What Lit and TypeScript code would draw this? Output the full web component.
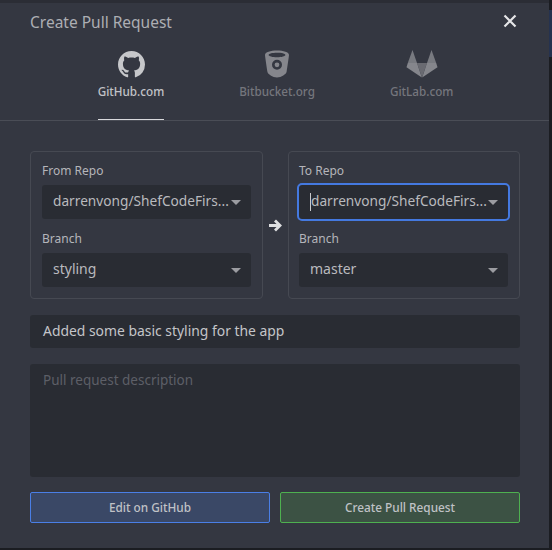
import { LitElement, html, css, svg } from 'lit';
import { customElement } from 'lit/decorators.js';

const githubIcon = svg`<svg viewBox="0 0 16 16" width="27" height="27"><path fill="currentColor" d="M8 0C3.58 0 0 3.58 0 8c0 3.54 2.29 6.53 5.47 7.59.4.07.55-.17.55-.38 0-.19-.01-.82-.01-1.49-2.01.37-2.53-.49-2.69-.94-.09-.23-.48-.94-.82-1.13-.28-.15-.68-.52-.01-.53.63-.01 1.08.58 1.23.82.72 1.21 1.87.87 2.33.66.07-.52.28-.87.51-1.07-1.78-.2-3.64-.89-3.64-3.95 0-.87.31-1.59.82-2.15-.08-.2-.36-1.02.08-2.12 0 0 .67-.21 2.2.82.64-.18 1.32-.27 2-.27s1.36.09 2 .27c1.53-1.04 2.2-.82 2.2-.82.44 1.1.16 1.92.08 2.12.51.56.82 1.27.82 2.15 0 3.07-1.87 3.75-3.65 3.95.29.25.54.73.54 1.48 0 1.07-.01 1.93-.01 2.2 0 .21.15.46.55.38A8.01 8.01 0 0 0 16 8c0-4.42-3.58-8-8-8z"/></svg>`;

const bitbucketIcon = svg`<svg viewBox="0 0 28 28" width="28" height="28"><path fill="currentColor" fill-rule="evenodd" d="M14 .500C7.500.500 2 2 2 5c0 .800 1.800 13.200 2.400 16.800.400 2.400 5.200 5.700 9.600 5.700s9.200-3.300 9.600-5.700C24.200 18.200 26 5.800 26 5c0-3-5.500-4.500-12-4.500zM14 2.800c4.600 0 8.400.900 8.400 2.100S18.600 7.200 14 7.200 5.600 6.100 5.600 4.900 9.400 2.800 14 2.800zM14 9.800a5 5 0 1 1 0 10 5 5 0 0 1 0-10zM14 12.400a2.400 2.400 0 1 0 0 4.800 2.400 2.400 0 0 0 0-4.800z"/></svg>`;

// fox logo: ears and wings in the full grey, the middle wedge a bit darker
const gitlabIcon = svg`<svg viewBox="0 0 32 28" width="32" height="28">
  <g fill="currentColor">
    <path d="M6.500 0 11 13H1.800z" opacity=".85" />
    <path d="M25.500 0 30.200 13H21z" opacity=".85" />
    <path d="M1.800 13H11l4.800 14.500L.5 17.200z" />
    <path d="M30.200 13H21l-4.800 14.500 15.300-10.300z" />
    <path d="M11 13h10l-5 14.500z" opacity=".65" />
  </g>
</svg>`;

const arrowIcon = svg`<svg viewBox="0 0 13 13" width="13" height="13"><path fill="none" stroke="currentColor" stroke-width="2.800" d="M0 6.500h10.500M6 1.500l5 5-5 5"/></svg>`;

@customElement('app-root')
export class AppRoot extends LitElement {
  static styles = css`
    :host {
      display: block;
      width: 552px;
      height: 550px;
      background: linear-gradient(#25324f, #25324f) no-repeat 549px 10px / 3px 47px, #1b1d22;
      overflow: hidden;
      font-family: 'Noto Sans', 'Open Sans', sans-serif;
      color: #c4c5c9;
    }
    .modal {
      box-sizing: border-box;
      width: 549px;
      height: 548px;
      border-top: 3px solid #2b2d35;
      background: #343741;
      display: flex;
      flex-direction: column;
    }
    .head {
      position: relative;
      height: 118px;
      box-sizing: border-box;
      border-bottom: 1px solid #4a4d56;
    }
    .title {
      position: absolute;
      left: 30px;
      top: 8px;
      font-size: 15.5px;
      line-height: 22px;
      color: #adaeb3;
    }
    .close {
      position: absolute;
      left: 503px;
      top: 11px;
      width: 14px;
      height: 14px;
      color: #e6e6e8;
    }
    .tabs {
      display: flex;
      justify-content: center;
      gap: 75px;
      padding: 33px 0 0 2px;
    }
    .tab {
      height: 84px;
      box-sizing: border-box;
      padding-top: 14px;
      display: flex;
      flex-direction: column;
      align-items: center;
      color: #75767d;
      font-size: 11.7px;
      font-weight: 500;
      white-space: nowrap;
    }
    .tab .icon {
      height: 28px;
      display: flex;
      align-items: center;
      margin-bottom: 4px;
      color: #85868c;
    }
    .tab span {
      line-height: 18px;
    }
    .tab.active {
      color: #c2c3c7;
      border-bottom: 1px solid #d8d9dc;
    }
    .tab.active .icon {
      color: #c6c7ca;
      padding-left: 2px;
    }
    .body {
      padding: 30px 29px 0 30px;
      display: flex;
      flex-direction: column;
    }
    .repos {
      display: flex;
      align-items: stretch;
    }
    .panel {
      box-sizing: border-box;
      width: 233px;
      height: 148px;
      border: 1px solid #464952;
      border-radius: 4px;
      padding: 10px 11px;
    }
    .panel.to {
      width: 232px;
      padding-left: 10px;
    }
    .arrow {
      flex: 1;
      display: flex;
      align-items: center;
      justify-content: center;
      color: #dedfe1;
    }
    label {
      display: block;
      font-size: 12px;
      line-height: 18px;
      height: 23px;
      color: #b4b5ba;
    }
    .select + label {
      margin-top: 11px;
    }
    .select {
      box-sizing: border-box;
      height: 34px;
      background: #292c33;
      border-radius: 3px;
      display: flex;
      align-items: center;
      padding: 0 10px 0 11px;
      font-size: 14px;
      color: #b9babe;
    }
    .select .value {
      flex: 1;
      white-space: nowrap;
      line-height: 18px;
      padding-bottom: 2px;
    }
    .select .value.long {
      font-size: 13.7px;
    }
    .select .caret {
      width: 0;
      height: 0;
      flex: none;
      border-left: 5px solid transparent;
      border-right: 5px solid transparent;
      border-top: 5px solid #9b9ca1;
    }
    .select.focus {
      outline: 2px solid #4479e0;
    }
    .select.focus .value {
      border-left: 1px solid #c8c9cc;
      padding-bottom: 0;
      line-height: 16px;
      height: 18px;
    }
    .subject {
      box-sizing: border-box;
      margin-top: 16px;
      height: 33px;
      background: #292c33;
      border-radius: 3px;
      padding: 0 13px;
      font-size: 13.9px;
      line-height: 31px;
      color: #c4c5c9;
    }
    .desc {
      box-sizing: border-box;
      margin-top: 16px;
      height: 113px;
      background: #292c33;
      border-radius: 3px;
      padding: 6px 13px;
      font-size: 13.5px;
      line-height: 20px;
      color: #5d5f67;
    }
    .actions {
      margin-top: 15px;
      display: grid;
      grid-template-columns: 240px 240px;
      gap: 10px;
    }
    .btn {
      box-sizing: border-box;
      height: 31px;
      padding-bottom: 2px;
      border-radius: 2px;
      display: flex;
      align-items: center;
      justify-content: center;
      font-size: 11.8px;
      font-weight: 500;
      color: #c0c2c6;
    }
    .btn.blue {
      background: #3a4866;
      border: 1px solid #4a7fe6;
    }
    .btn.green {
      background: #3c5244;
      border: 1px solid #4eb050;
    }
  `;

  renderSelect(value: string, long = false, focus = false) {
    return html`<div class="select ${focus ? 'focus' : ''}">
      <div class="value ${long ? 'long' : ''}">${value}</div>
      <div class="caret"></div>
    </div>`;
  }

  render() {
    const repo = 'darrenvong/ShefCodeFirs...';
    return html`
      <div class="modal">
        <div class="head">
          <div class="title">Create Pull Request</div>
          <svg class="close" viewBox="0 0 14 14">
            <path fill="none" stroke="currentColor" stroke-width="2.200" d="M1.500 1.500l11 11M12.500 1.500l-11 11" />
          </svg>
          <div class="tabs">
            <div class="tab active"><div class="icon">${githubIcon}</div><span>GitHub.com</span></div>
            <div class="tab"><div class="icon">${bitbucketIcon}</div><span>Bitbucket.org</span></div>
            <div class="tab"><div class="icon">${gitlabIcon}</div><span>GitLab.com</span></div>
          </div>
        </div>
        <div class="body">
          <div class="repos">
            <div class="panel">
              <label>From Repo</label>
              ${this.renderSelect(repo, true)}
              <label>Branch</label>
              ${this.renderSelect('styling')}
            </div>
            <div class="arrow">${arrowIcon}</div>
            <div class="panel to">
              <label>To Repo</label>
              ${this.renderSelect(repo, true, true)}
              <label>Branch</label>
              ${this.renderSelect('master')}
            </div>
          </div>
          <div class="subject">Added some basic styling for the app</div>
          <div class="desc">Pull request description</div>
          <div class="actions">
            <div class="btn blue">Edit on GitHub</div>
            <div class="btn green">Create Pull Request</div>
          </div>
        </div>
      </div>
    `;
  }
}
